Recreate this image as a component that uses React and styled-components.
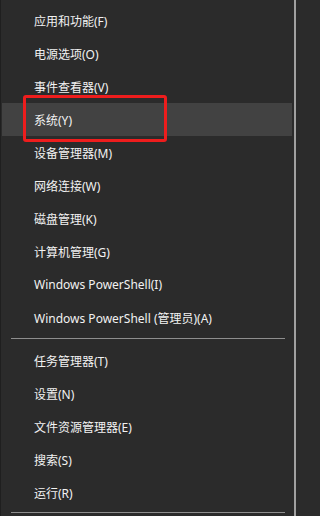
import styled, { createGlobalStyle } from 'styled-components';

const GlobalStyle = createGlobalStyle`
  html, body {
    margin: 0;
    padding: 0;
    background: #2b2b2b;
  }
`;

const Menu = styled.div`
  width: 296px;
  height: 516px;
  box-sizing: border-box;
  background: #2b2b2b;
  border-left: 1px solid #1f1f1f;
  border-right: 2px solid #a0a0a0;
  padding: 4px 2px 0 1px;
  font-family: "Noto Sans", "Noto Sans CJK SC", sans-serif;
  font-size: 12px;
  color: #f2f2f2;
`;

const Group = styled.div`
  display: flex;
  flex-direction: column;
`;

const Item = styled.div`
  position: relative;
  height: 33px;
  display: flex;
  align-items: center;
  padding-left: 32px;
  background: ${(p) => (p.$active ? '#424242' : 'transparent')};
  white-space: nowrap;
`;

const Separator = styled.div`
  height: 1px;
  background: #8e8e8e;
  margin: ${(p) => p.$margin};
  margin-left: 9px;
  margin-right: 7px;
`;

const Callout = styled.div`
  position: absolute;
  left: 21px;
  top: -8px;
  width: 144px;
  height: 47px;
  box-sizing: border-box;
  border: 3px solid #ee1d1d;
  border-radius: 3px;
  pointer-events: none;
`;

const topItems = [
  '应用和功能(F)',
  '电源选项(O)',
  '事件查看器(V)',
  '系统(Y)',
  '设备管理器(M)',
  '网络连接(W)',
  '磁盘管理(K)',
  '计算机管理(G)',
  'Windows PowerShell(I)',
  'Windows PowerShell (管理员)(A)',
];

const bottomItems = [
  '任务管理器(T)',
  '设置(N)',
  '文件资源管理器(E)',
  '搜索(S)',
  '运行(R)',
];

const App = () => {
  return (
    <>
      <GlobalStyle />
      <Menu>
        <Group>
          {topItems.map((label) => {
            const active = label === '系统(Y)';
            return (
              <Item key={label} $active={active}>
                {label}
                {active && <Callout />}
              </Item>
            );
          })}
        </Group>
        <Separator $margin="4px 0 5px" />
        <Group>
          {bottomItems.map((label) => (
            <Item key={label}>{label}</Item>
          ))}
        </Group>
        <Separator $margin="3px 0 0" />
      </Menu>
    </>
  );
};

export default App;
